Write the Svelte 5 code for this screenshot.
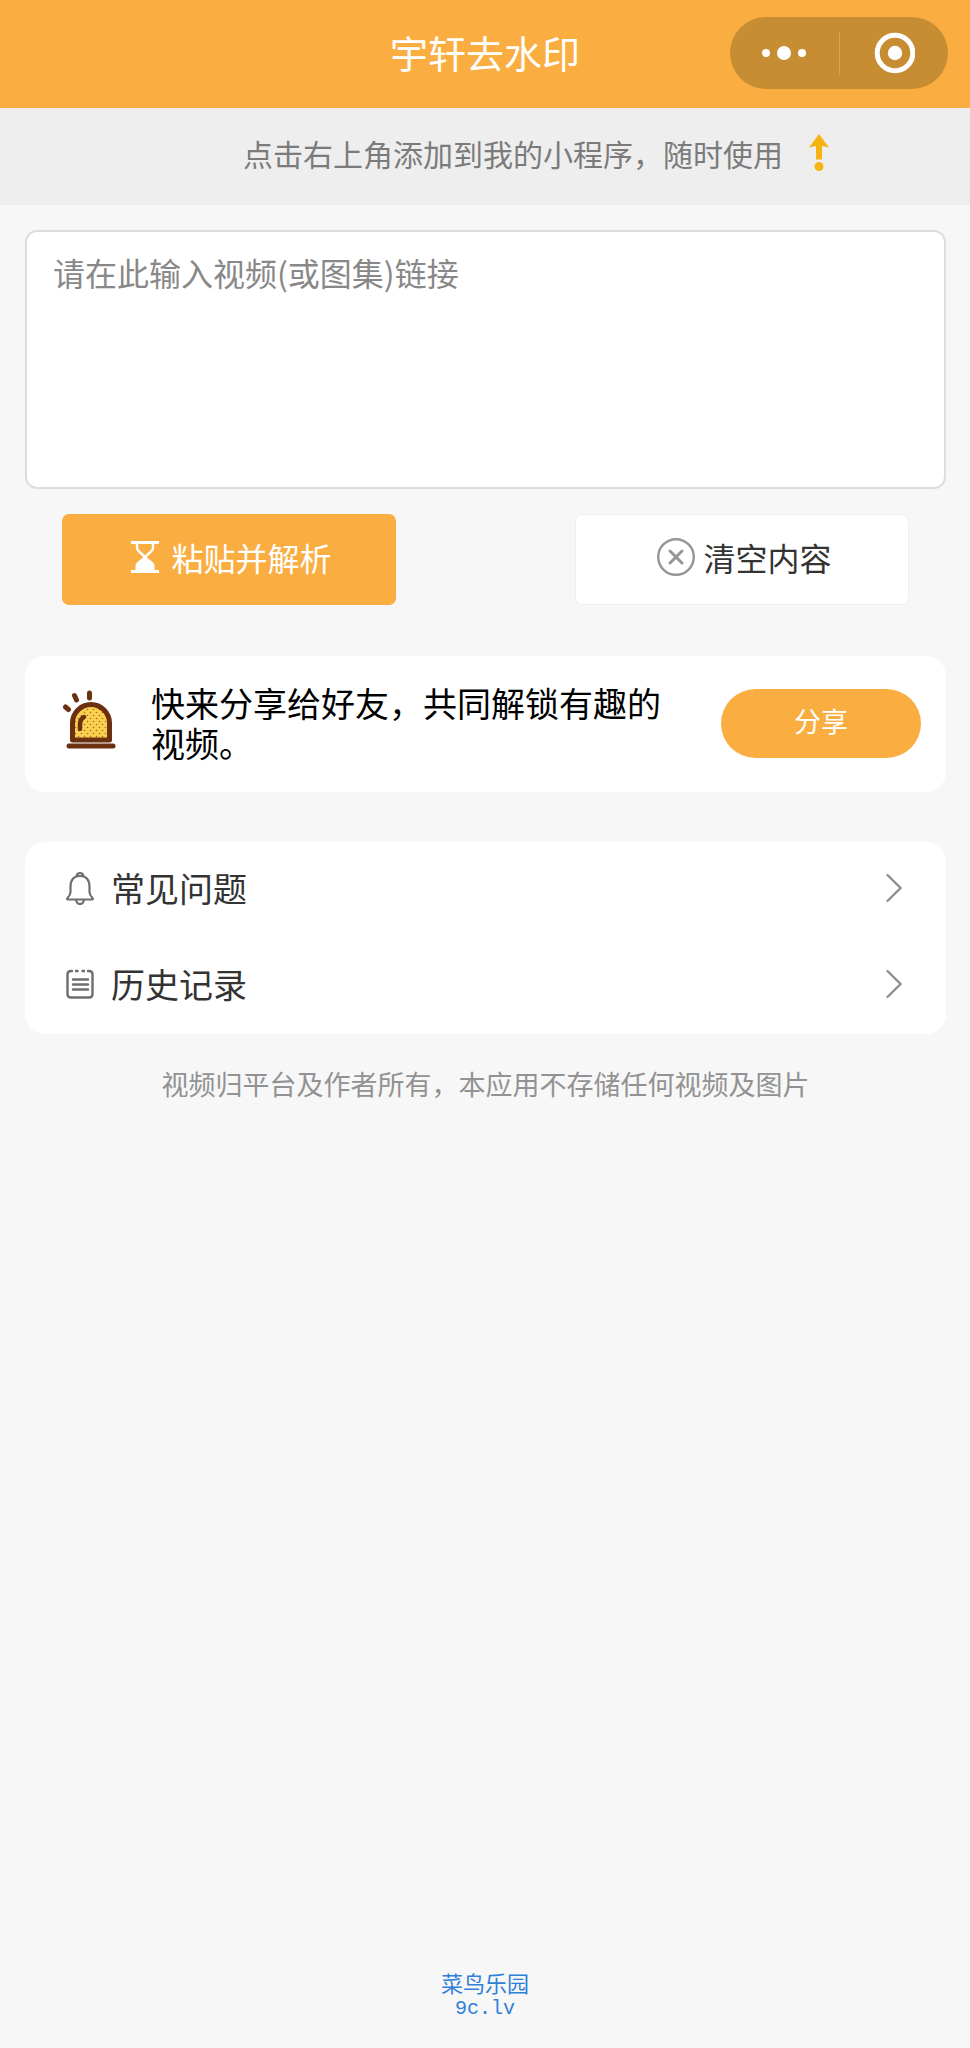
<script lang="ts">
	let link = $state('');

	async function pasteLink() {
		link = await navigator.clipboard.readText();
	}

	function clearLink() {
		link = '';
	}
</script>

<div class="page">
	<header class="navbar">
		<h1>宇轩去水印</h1>
		<div class="capsule">
			<button type="button" aria-label="更多">
				<svg width="44" height="16" viewBox="0 0 44 16" fill="#fff">
					<circle cx="4" cy="8" r="4" />
					<circle cx="22" cy="8" r="7" />
					<circle cx="40" cy="8" r="4" />
				</svg>
			</button>
			<span class="divider"></span>
			<button type="button" aria-label="关闭">
				<svg width="42" height="42" viewBox="0 0 42 42">
					<circle cx="22" cy="21" r="17.8" fill="none" stroke="#fff" stroke-width="5" />
					<circle cx="22" cy="21" r="7.2" fill="#fff" />
				</svg>
			</button>
		</div>
	</header>

	<div class="notice">
		<span>点击右上角添加到我的小程序，随时使用</span>
		<svg width="20" height="38" viewBox="0 0 20 38" fill="#f5b412">
			<path d="M10 0L20 13.5L13 12V25.5H7V12L0 13.5Z" />
			<circle cx="10" cy="32.5" r="4.5" />
		</svg>
	</div>

	<main>
		<textarea bind:value={link} aria-label="视频链接" placeholder="请在此输入视频(或图集)链接"></textarea>

		<div class="actions">
			<button type="button" class="action primary" onclick={pasteLink}>
				<svg width="28" height="32" viewBox="0 0 28 32">
					<path d="M0 1.5H28M0 30.5H28" stroke="#fff" stroke-width="2.8" />
					<path d="M6 2V7Q6 9 8 10.5L14 16L20 10.5Q22 9 22 7V2" fill="none" stroke="#fff" stroke-width="2.4" />
					<path d="M14 15L21 20.5Q23.500 22.500 23.500 25V30H4.500V25Q4.500 22.500 7 20.500Z" fill="#fff" />
				</svg>
				<span>粘贴并解析</span>
			</button>
			<button type="button" class="action plain" onclick={clearLink}>
				<svg width="38" height="38" viewBox="0 0 38 38" fill="none" stroke="#969696">
					<circle cx="19" cy="19" r="17.8" stroke-width="2.4" />
					<path d="M13 13L25 25M25 13L13 25" stroke-width="3" stroke-linecap="round" />
				</svg>
				<span>清空内容</span>
			</button>
		</div>

		<section class="card share">
			<svg class="siren" width="54" height="60" viewBox="0 0 54 60">
				<defs>
					<pattern id="dots" width="6" height="6" patternUnits="userSpaceOnUse">
						<rect width="6" height="6" fill="#fbd04e" />
						<circle cx="1.5" cy="1.5" r=".8" fill="#a96a25" />
						<circle cx="4.5" cy="4.5" r=".8" fill="#a96a25" />
					</pattern>
				</defs>
				<path d="M10.5 50V33A18.500 18.500 0 0 1 47.500 33V50Z" fill="url(#dots)" stroke="#6b3010" stroke-width="5" stroke-linejoin="round" />
				<path d="M18 39V35Q18 29 22 27" fill="none" stroke="#6b3010" stroke-width="4.500" stroke-linecap="round" />
				<path d="M7 56H51" stroke="#6b3010" stroke-width="5" stroke-linecap="round" />
				<path d="M3.500 17L6.500 19.500M12.500 5.500L14.500 10M27.500 3V8" stroke="#6b3010" stroke-width="5" stroke-linecap="round" />
			</svg>
			<p>快来分享给好友，共同解锁有趣的视频。</p>
			<button type="button" class="share-btn">分享</button>
		</section>

		<nav class="card menu">
			<a href="#faq">
				<svg width="28" height="34" viewBox="0 0 28 34" fill="none" stroke="#6e6e6e" stroke-width="2.2" stroke-linejoin="round">
					<path d="M4.500 16Q4.500 5 14 5T23.500 16V21Q23.500 24 26.500 27Q27.500 28.500 26 28.500H2Q.5 28.500 1.500 27Q4.500 24 4.500 21Z" />
					<path d="M10.500 5.500Q11 2 14 2T17.500 5.500" />
					<path d="M10 29Q11 33 14 33T18 29" />
				</svg>
				<span>常见问题</span>
				<svg class="chevron" width="18" height="32" viewBox="0 0 18 32" fill="none" stroke="#8f8f8f" stroke-width="2.400">
					<path d="M2.500 3L15.500 16L2.500 29" stroke-linecap="round" />
				</svg>
			</a>
			<a href="#history">
				<svg width="28" height="34" viewBox="0 0 28 34" fill="none" stroke="#6e6e6e" stroke-width="2.400">
					<path d="M6 4H5Q1.500 4 1.500 7.500V27Q1.500 30.500 5 30.500H23Q26.500 30.500 26.500 27V7.500Q26.500 4 23 4H22" stroke-linecap="round" />
					<path d="M9 4H12.500M15.500 4H19" />
					<path d="M7 12.500H22M7 17.500H22M7 22.500H22" stroke-linecap="round" />
				</svg>
				<span>历史记录</span>
				<svg class="chevron" width="18" height="32" viewBox="0 0 18 32" fill="none" stroke="#8f8f8f" stroke-width="2.400">
					<path d="M2.500 3L15.500 16L2.500 29" stroke-linecap="round" />
				</svg>
			</a>
		</nav>

		<p class="disclaimer">视频归平台及作者所有，本应用不存储任何视频及图片</p>
	</main>

	<footer>
		<span class="site">菜鸟乐园</span>
		<span class="domain">9c.lv</span>
	</footer>
</div>

<style>
	:global(body) {
		background: #f7f7f7;
	}

	.page {
		display: flex;
		flex-direction: column;
		min-height: 100vh;
		font-family: "Noto Sans CJK SC", sans-serif;
		color: #333;
	}

	button,
	textarea {
		font-family: inherit;
		box-sizing: border-box;
	}

	button {
		border: none;
		padding: 0;
		cursor: pointer;
	}

	svg {
		display: block;
		flex: none;
	}

	.navbar {
		display: grid;
		grid-template-columns: 1fr auto 1fr;
		align-items: center;
		height: 108px;
		padding: 0 22px 2px;
		box-sizing: border-box;
		background: #faae42;
	}

	h1 {
		grid-column: 2;
		margin: 0;
		padding-bottom: 2px;
		font-family: KaiTi, "Noto Sans CJK SC", cursive;
		font-size: 38px;
		font-weight: 400;
		line-height: 48px;
		color: #fff;
	}

	.capsule {
		justify-self: end;
		display: flex;
		align-items: center;
		width: 218px;
		height: 72px;
		border-radius: 36px;
		background: #c68d32;
	}

	.capsule button {
		flex: 1;
		height: 100%;
		display: flex;
		align-items: center;
		justify-content: center;
		background: none;
	}

	.divider {
		width: 1px;
		height: 43px;
		background: #d8a558;
	}

	.notice {
		display: flex;
		align-items: center;
		justify-content: center;
		gap: 26px;
		height: 97px;
		padding: 0 0 8px 102px;
		box-sizing: border-box;
		background: #eee;
		color: #7b7b7b;
		font-size: 30px;
	}

	main {
		padding: 25px 24px 0 25px;
	}

	textarea {
		display: block;
		width: 100%;
		height: 259px;
		padding: 18px 26px;
		border: 2px solid #ddd;
		border-radius: 12px;
		background: #fff;
		color: #333;
		font-size: 32px;
		line-height: 44px;
		resize: none;
		outline: none;
	}

	textarea::placeholder {
		color: #888;
		opacity: 1;
	}

	.actions {
		display: flex;
		justify-content: space-between;
		margin-top: 25px;
		padding: 0 37px;
	}

	.action {
		display: flex;
		align-items: center;
		justify-content: center;
		width: 334px;
		height: 91px;
		padding: 0 0 5px 5px;
		border-radius: 7px;
		font-size: 32px;
	}

	.primary {
		gap: 12px;
		background: #faae42;
		color: #fff;
	}

	.plain {
		gap: 8px;
		border: 1px solid #eee;
		background: #fff;
		color: #333;
	}

	.card {
		border-radius: 20px;
		background: #fff;
	}

	.share {
		display: flex;
		align-items: center;
		margin-top: 51px;
		padding: 27px 25px 29px 37px;
	}

	.siren {
		margin-bottom: 6px;
	}

	.share p {
		flex: 1;
		margin: 0 50px 0 35px;
		font-size: 34px;
		line-height: 40px;
		color: #000;
	}

	.share-btn {
		width: 200px;
		height: 69px;
		padding-bottom: 6px;
		border-radius: 35px;
		background: #faae42;
		color: #fff;
		font-size: 27px;
	}

	.menu {
		margin-top: 50px;
	}

	.menu a {
		display: flex;
		align-items: center;
		gap: 17px;
		height: 96px;
		padding: 0 43px 5px 41px;
		box-sizing: border-box;
		font-size: 34px;
		line-height: 48px;
		color: #333;
		text-decoration: none;
	}

	.chevron {
		margin-left: auto;
	}

	.disclaimer {
		margin: 30px 0 0;
		font-size: 27px;
		line-height: 40px;
		text-align: center;
		color: #929292;
	}

	footer {
		display: flex;
		flex-direction: column;
		align-items: center;
		margin-top: auto;
		padding-bottom: 28px;
		color: #2f80d8;
	}

	.site {
		font-family: KaiTi, "Noto Sans CJK SC", serif;
		font-size: 22px;
		line-height: 32px;
	}

	.domain {
		font-family: "Liberation Mono", monospace;
		font-size: 20px;
		line-height: 22px;
	}
</style>
